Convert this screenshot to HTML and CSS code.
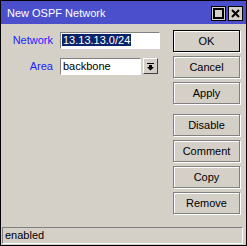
FILE: index.html
```
<!DOCTYPE html>
<html lang="en">
<head>
    <meta charset="UTF-8">
    <title>New OSPF Network</title>
    <link rel="stylesheet" href="styles.css">
</head>
<body>
    <div class="window">
        <div class="titlebar">
            <span class="title">New OSPF Network</span>
            <div class="title-buttons">
                <span class="tbtn">
                    <svg width="11" height="11" viewBox="0 0 11 11"><rect x="1" y="1" width="9" height="9" fill="none" stroke="#000" stroke-width="2"/></svg>
                </span>
                <span class="tbtn">
                    <svg width="11" height="11" viewBox="0 0 11 11"><path d="M2 2 L9 9 M9 2 L2 9" stroke="#000" stroke-width="2"/></svg>
                </span>
            </div>
        </div>

        <div class="content">
            <div class="form">
                <div class="row">
                    <label class="label">Network</label>
                    <div class="field field-wide"><span class="selected">13.13.13.0/24</span></div>
                </div>
                <div class="row">
                    <label class="label">Area</label>
                    <div class="field field-short">backbone</div>
                    <span class="drop">
                        <svg width="9" height="9" viewBox="0 0 9 9"><path d="M1 1.5 H8" stroke="#000" stroke-width="1"/><path d="M3 3 H6 V5 H8 L4.5 8.5 L1 5 H3 Z" fill="#000"/></svg>
                    </span>
                </div>
            </div>

            <div class="buttons">
                <button class="btn btn-default">OK</button>
                <button class="btn">Cancel</button>
                <button class="btn">Apply</button>
                <button class="btn btn-gap">Disable</button>
                <button class="btn">Comment</button>
                <button class="btn">Copy</button>
                <button class="btn">Remove</button>
            </div>
        </div>

        <div class="status">enabled</div>
    </div>
</body>
</html>
```

FILE: styles.css
```
body {
    margin: 0;
    padding: 0;
    background-color: #d4d0c8;
    font-family: "Liberation Sans", Arial, sans-serif;
    font-size: 11px;
}

.window {
    width: 247px;
    height: 246px;
    box-sizing: border-box;
    border: 1px solid #000;
    background-color: #d4d0c8;
    display: flex;
    flex-direction: column;
}

.titlebar {
    height: 23px;
    background-color: #4b4fcc;
    display: flex;
    align-items: center;
    justify-content: space-between;
    padding: 0 3px 0 6px;
    flex-shrink: 0;
}

.title {
    color: #fff;
    font-size: 11px;
    padding-top: 1px;
}

.title-buttons {
    display: flex;
    gap: 2px;
    padding-top: 1px;
}

.tbtn {
    width: 13px;
    height: 13px;
    border: 1px solid #000;
    background-color: #d4d0c8;
    display: flex;
    align-items: center;
    justify-content: center;
}

.content {
    flex: 1;
    display: flex;
    justify-content: space-between;
    padding: 6px 6px 0 0;
}

.form {
    display: flex;
    flex-direction: column;
    gap: 8px;
    padding-top: 1px;
}

.row {
    display: flex;
    align-items: center;
    height: 18px;
}

.label {
    width: 52px;
    text-align: right;
    color: #1c1cff;
    margin-right: 7px;
}

.field {
    height: 17px;
    box-sizing: border-box;
    background-color: #fff;
    border-top: 1px solid #808080;
    border-left: 1px solid #808080;
    border-right: 1px solid #fff;
    border-bottom: 1px solid #fff;
    padding: 0 1px;
    line-height: 15px;
    color: #000;
}

.field-wide {
    width: 100px;
}

.field-short {
    width: 81px;
    padding-left: 2px;
}

.selected {
    background-color: #0a246a;
    color: #fff;
    padding: 0 1px;
}

.drop {
    width: 15px;
    height: 16px;
    box-sizing: border-box;
    margin-left: 2px;
    border-top: 1px solid #fff;
    border-left: 1px solid #fff;
    border-right: 1px solid #404040;
    border-bottom: 1px solid #404040;
    display: flex;
    align-items: center;
    justify-content: center;
}

.buttons {
    display: flex;
    flex-direction: column;
    gap: 4px;
    width: 67px;
}

.btn {
    height: 22px;
    font-family: "Liberation Sans", Arial, sans-serif;
    font-size: 11px;
    color: #000;
    background-color: #d4d0c8;
    border: 1px solid #808080;
    box-shadow: inset 1px 1px 0 #fff, 1px 1px 0 #fff;
    padding: 0;
}

.btn-default {
    border-color: #000;
}

.btn-gap {
    margin-top: 6px;
}

.status {
    height: 17px;
    margin: 0 3px 1px 1px;
    box-sizing: border-box;
    border-top: 1px solid #808080;
    border-left: 1px solid #808080;
    border-right: 1px solid #fff;
    border-bottom: 1px solid #fff;
    padding-left: 2px;
    line-height: 15px;
}
```
